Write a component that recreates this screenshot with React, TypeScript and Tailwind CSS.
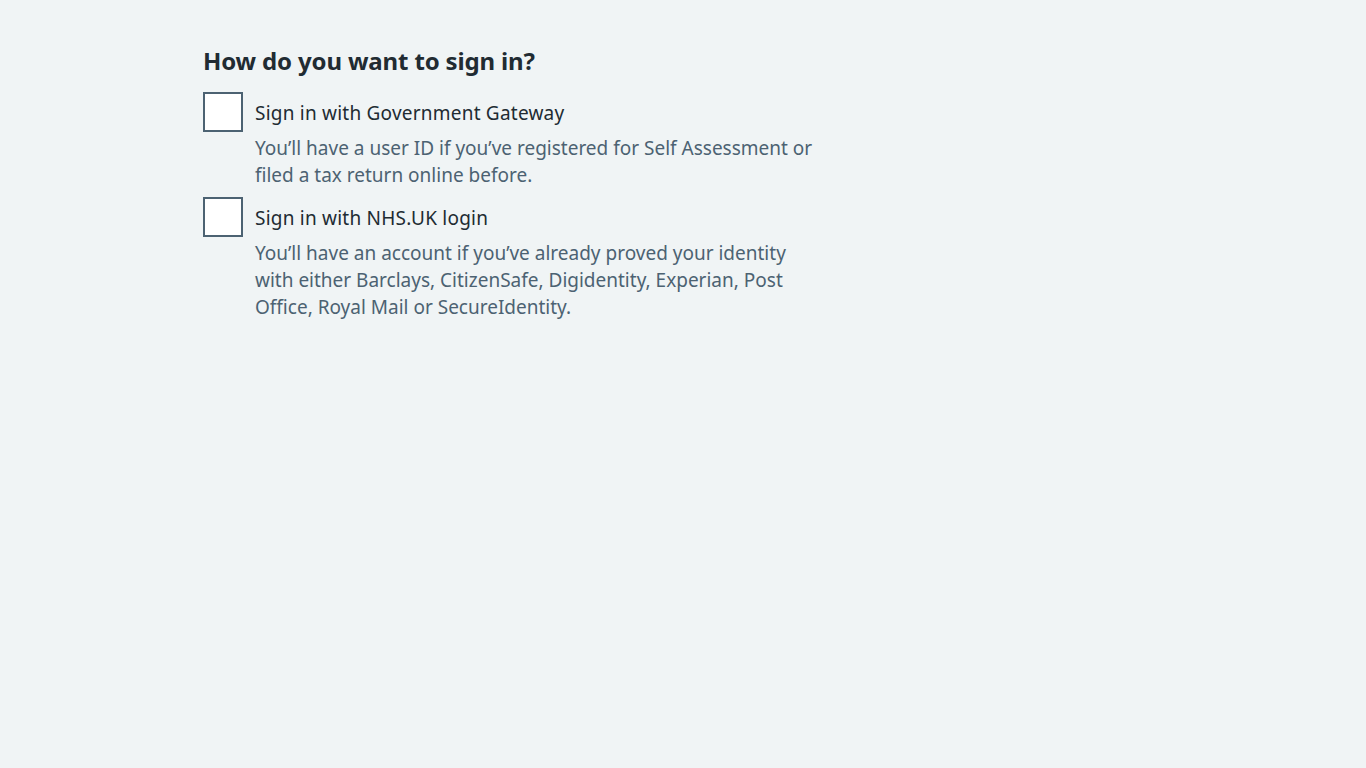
export default function App() {
  const options = [
    {
      id: "gg",
      label: "Sign in with Government Gateway",
      hint: "You’ll have a user ID if you’ve registered for Self Assessment or filed a tax return online before.",
    },
    {
      id: "nhs",
      label: "Sign in with NHS.UK login",
      hint: "You’ll have an account if you’ve already proved your identity with either Barclays, CitizenSafe, Digidentity, Experian, Post Office, Royal Mail or SecureIdentity.",
    },
  ];

  return (
    <div
      className="min-h-screen bg-[#f0f4f5] text-[#212b32]"
      style={{ fontFamily: '"Noto Sans", Arial, sans-serif' }}
    >
      <div className="pl-[203px] pt-[45px]">
        <h1 className="text-[24px] font-bold leading-[32px] tracking-[-0.15px]">How do you want to sign in?</h1>
        <div className="mt-[15px] flex w-[625px] flex-col gap-[8px]">
          {options.map((o) => (
            <div key={o.id}>
              <label className="flex items-center">
                <input
                  type="checkbox"
                  className="h-[40px] w-[40px] shrink-0 appearance-none border-2 border-[#4c6272] bg-white"
                />
                <span className="pl-[12px] pt-[2px] text-[19px] leading-[24px] tracking-[0.22px]">{o.label}</span>
              </label>
              <p className="mt-[3px] pl-[52px] text-[19px] leading-[27px] text-[#4c6272]">{o.hint}</p>
            </div>
          ))}
        </div>
      </div>
    </div>
  );
}
